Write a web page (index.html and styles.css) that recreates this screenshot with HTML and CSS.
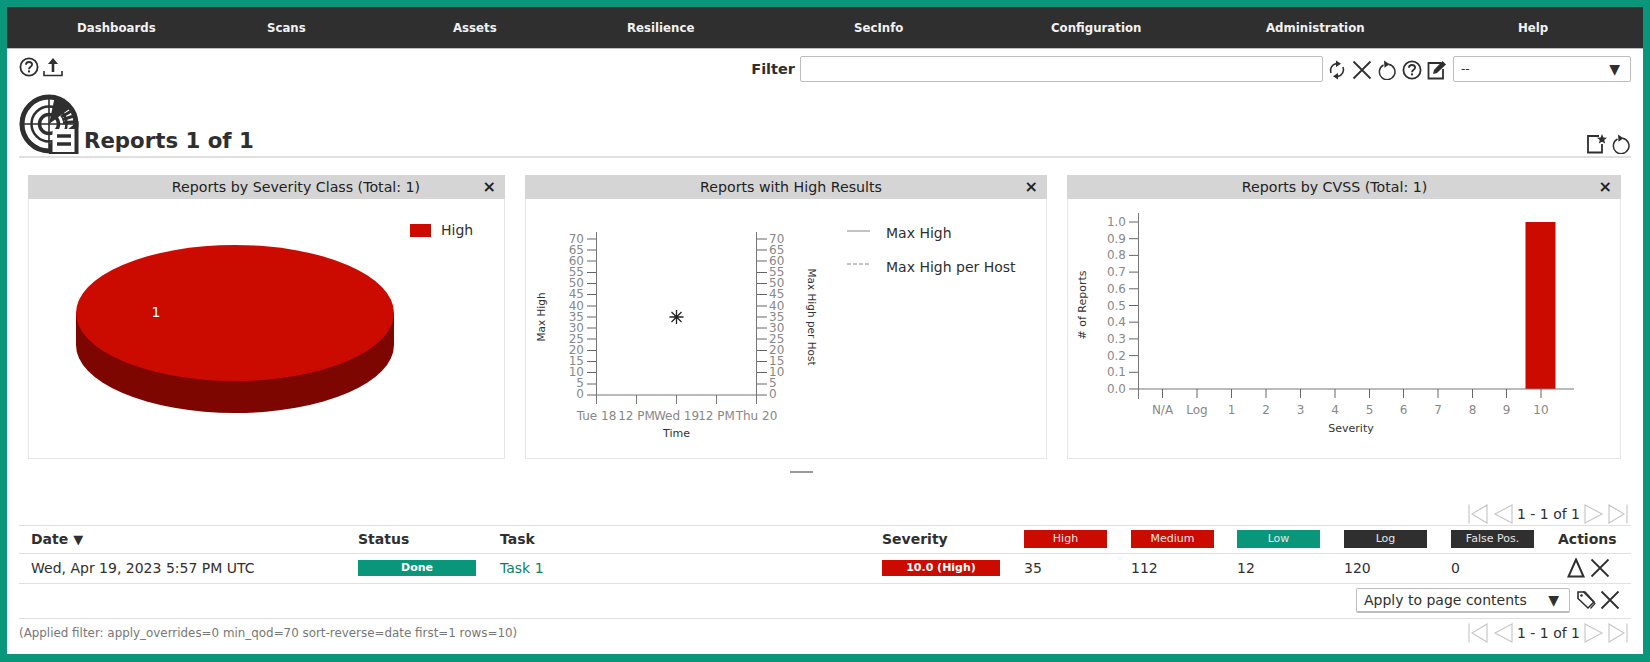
FILE: index.html
```html
<!DOCTYPE html>
<html>
<head>
<meta charset="UTF-8">
<title>Reports</title>
<link rel="stylesheet" href="styles.css">
</head>
<body>

<svg class="defs" width="0" height="0">
	<symbol id="i-help" viewBox="0 0 20 20">
		<circle cx="10" cy="10" r="8.6" fill="none" stroke="#2f2f2f" stroke-width="1.8"/>
		<path d="M6.9 7.8 C7 5.8 8.4 5 10 5 C11.8 5 13.1 6.1 13.1 7.6 C13.1 9.8 10 9.7 10 12.2" fill="none" stroke="#2f2f2f" stroke-width="1.8"/>
		<rect x="9" y="13.4" width="2" height="2" fill="#2f2f2f"/>
	</symbol>
	<symbol id="i-upload" viewBox="0 0 20 20">
		<path d="M10 1 L15 7 H11.3 V15 H8.7 V7 H5 Z" fill="#2f2f2f"/>
		<path d="M1 14 V18.5 H19 V14" fill="none" stroke="#2f2f2f" stroke-width="1.6"/>
	</symbol>
	<symbol id="i-close" viewBox="0 0 20 20">
		<path d="M1.5 1.5 L18.5 18.5 M18.5 1.5 L1.5 18.5" stroke="#2f2f2f" stroke-width="1.8"/>
	</symbol>
	<symbol id="i-reset" viewBox="0 0 20 20">
		<path d="M6.5 5 A7.8 7.8 0 1 0 11.5 4.2" fill="none" stroke="#2f2f2f" stroke-width="1.5"/>
		<path d="M7 0.5 L12.5 4.2 L7.5 7.8 Z" fill="#2f2f2f"/>
	</symbol>
	<symbol id="i-refresh" viewBox="0 0 20 20">
		<path d="M4 13 A7 7 0 0 1 9 3.6 M16 7 A7 7 0 0 1 11 16.4" fill="none" stroke="#2f2f2f" stroke-width="1.6"/>
		<path d="M9 0.5 L14 3.8 L9 7 Z M11 19.5 L6 16.2 L11 13 Z" fill="#2f2f2f"/>
	</symbol>
	<symbol id="i-edit" viewBox="0 0 20 20">
		<path d="M14 3 H1.5 V18.5 H16 V9" fill="none" stroke="#2f2f2f" stroke-width="1.8"/>
		<path d="M6 14 L7 10 L15.5 1 L19 4.5 L10 13 Z" fill="#2f2f2f"/>
	</symbol>
	<symbol id="i-new" viewBox="0 0 20 20">
		<path d="M12 2 H1 V18.5 H15 V10" fill="none" stroke="#2f2f2f" stroke-width="1.8"/>
		<path d="M15 0 L16.4 3.4 L20 3.7 L17.2 6 L18.2 9.6 L15 7.7 L11.8 9.6 L12.8 6 L10 3.7 L13.6 3.4 Z" fill="#2f2f2f"/>
	</symbol>
	<symbol id="i-delta" viewBox="0 0 20 20">
		<path d="M9 1.500 L16.500 18.500 H1.500 Z" fill="none" stroke="#2f2f2f" stroke-width="2"/>
	</symbol>
	<symbol id="i-tag" viewBox="0 0 20 20">
		<path d="M2 2 H9 L18 12 L12 18 L2 8.5 Z" fill="none" stroke="#2f2f2f" stroke-width="1.6"/>
		<path d="M7 1.5 L19 13.5 L14.5 18.5" fill="none" stroke="#2f2f2f" stroke-width="1.2"/>
		<circle cx="5.5" cy="5.5" r="1.3" fill="#2f2f2f"/>
	</symbol>
	<symbol id="i-first" viewBox="0 0 20 20">
		<path d="M1 0.5 V19.5 M19 1 L4 10 L19 19 Z" fill="none" stroke="#c8c8c8" stroke-width="1.2"/>
	</symbol>
	<symbol id="i-prev" viewBox="0 0 20 20">
		<path d="M19 1 L2 10 L19 19 Z" fill="none" stroke="#c8c8c8" stroke-width="1.2"/>
	</symbol>
	<symbol id="i-next" viewBox="0 0 20 20">
		<path d="M1 1 L18 10 L1 19 Z" fill="none" stroke="#c8c8c8" stroke-width="1.2"/>
	</symbol>
	<symbol id="i-last" viewBox="0 0 20 20">
		<path d="M19 0.5 V19.5 M1 1 L16 10 L1 19 Z" fill="none" stroke="#c8c8c8" stroke-width="1.2"/>
	</symbol>
</svg>

<div class="app">

	<div class="menu">
		<a>Dashboards</a>
		<a>Scans</a>
		<a>Assets</a>
		<a>Resilience</a>
		<a>SecInfo</a>
		<a>Configuration</a>
		<a>Administration</a>
		<a>Help</a>
	</div>

	<div class="main">

		<div class="toolbar">
			<div class="tools">
				<svg class="ico"><use href="#i-help"/></svg>
				<svg class="ico"><use href="#i-upload"/></svg>
			</div>
			<div class="filter">
				<b class="filter-label">Filter</b>
				<div class="filter-input"></div>
				<svg class="ico"><use href="#i-refresh"/></svg>
				<svg class="ico"><use href="#i-close"/></svg>
				<svg class="ico"><use href="#i-reset"/></svg>
				<svg class="ico"><use href="#i-help"/></svg>
				<svg class="ico"><use href="#i-edit"/></svg>
				<div class="select filter-select"><span>--</span><span class="arrow">▼</span></div>
			</div>
		</div>

		<div class="title-row">
			<svg class="logo" viewBox="0 0 60 60">
				<circle cx="30" cy="30" r="27" fill="#fff" stroke="#2f2f2f" stroke-width="5"/>
				<circle cx="30" cy="30" r="17.5" fill="none" stroke="#2f2f2f" stroke-width="2.500"/>
				<circle cx="30" cy="30" r="9.5" fill="none" stroke="#2f2f2f" stroke-width="3.5"/>
				<path d="M3 30 H57 M30 3 V57" stroke="#2f2f2f" stroke-width="1.6"/>
				<path d="M30 30 L36 2 A29 29 0 0 1 53 13 Z" fill="#2f2f2f"/>
				<path d="M42 23 L52.500 17 M43.300 25.700 L54.700 22 M44 28.800 L56 27.700" stroke="#2f2f2f" stroke-width="3"/>
				<path d="M59.5 27 V60 H30 V50 Z" fill="#2f2f2f"/>
				<rect x="33.5" y="35" width="22" height="23" fill="#fff"/>
				<path d="M38 42 H52 M38 50 H52" stroke="#2f2f2f" stroke-width="3.6"/>
			</svg>
			<h1 class="title">Reports 1 of 1</h1>
			<div class="title-tools">
				<svg class="ico"><use href="#i-new"/></svg>
				<svg class="ico"><use href="#i-reset"/></svg>
			</div>
		</div>

		<div class="panels">

			<div class="panel">
				<div class="panel-head head-sev"><span>Reports by Severity Class (Total: 1)</span><b class="panel-close">×</b></div>
				<svg class="chart" viewBox="29 199 475 259">
					<path d="M76 313 V345 A159 68 0 0 0 394 345 V313 Z" fill="#7d0600"/>
					<ellipse cx="235" cy="313" rx="159" ry="68" fill="#cc0b00"/>
					<text x="156" y="317" class="pie-label">1</text>
					<rect x="410" y="224" width="21" height="13" fill="#cc0b00"/>
					<text x="441" y="235" class="legend">High</text>
				</svg>
			</div>

			<div class="panel">
				<div class="panel-head head-high"><span>Reports with High Results</span><b class="panel-close">×</b></div>
				<svg class="chart" viewBox="526 199 520 259">
					<path d="M596.500 232 V404 M756.500 232 V404 M596.500 395 H756.500 M636.500 395 V404 M676.500 395 V404 M716.500 395 V404" stroke="#777" fill="none"/>
					<path d="M587 239 H596 M587 250 H596 M587 261 H596 M587 272.500 H596 M587 283.500 H596 M587 294.500 H596 M587 306 H596 M587 317 H596 M587 328 H596 M587 339 H596 M587 350.500 H596 M587 361.500 H596 M587 372.500 H596 M587 384 H596 M587 395 H596" stroke="#666"/>
					<path d="M757 239 H767 M757 250 H767 M757 261 H767 M757 272.500 H767 M757 283.500 H767 M757 294.500 H767 M757 306 H767 M757 317 H767 M757 328 H767 M757 339 H767 M757 350.500 H767 M757 361.500 H767 M757 372.500 H767 M757 384 H767 M757 395 H767" stroke="#666"/>
					<g class="tick tick-end">
						<text x="584" y="243">70</text><text x="584" y="254">65</text><text x="584" y="265">60</text><text x="584" y="276">55</text><text x="584" y="287">50</text><text x="584" y="298">45</text><text x="584" y="310">40</text><text x="584" y="321">35</text><text x="584" y="332">30</text><text x="584" y="343">25</text><text x="584" y="354">20</text><text x="584" y="365">15</text><text x="584" y="376">10</text><text x="584" y="387">5</text><text x="584" y="398">0</text>
					</g>
					<g class="tick">
						<text x="769" y="243">70</text><text x="769" y="254">65</text><text x="769" y="265">60</text><text x="769" y="276">55</text><text x="769" y="287">50</text><text x="769" y="298">45</text><text x="769" y="310">40</text><text x="769" y="321">35</text><text x="769" y="332">30</text><text x="769" y="343">25</text><text x="769" y="354">20</text><text x="769" y="365">15</text><text x="769" y="376">10</text><text x="769" y="387">5</text><text x="769" y="398">0</text>
					</g>
					<g class="tick tick-mid">
						<text x="596.500" y="420">Tue 18</text><text x="636.500" y="420">12 PM</text><text x="676.500" y="420">Wed 19</text><text x="716.500" y="420">12 PM</text><text x="756.500" y="420">Thu 20</text>
					</g>
					<text x="676.500" y="437" class="axis-title">Time</text>
					<text class="axis-title axis-side" transform="translate(545 317) rotate(-90)">Max High</text>
					<text class="axis-title axis-side" transform="translate(808 317) rotate(90)">Max High per Host</text>
					<path d="M676.500 310 V324 M669.500 317 H683.500 M671.500 312 L681.500 322 M681.500 312 L671.500 322" stroke="#222" stroke-width="1.3"/>
					<path d="M847 231 H870" stroke="#888"/>
					<path d="M847 264 H869" stroke="#888" stroke-dasharray="4 2"/>
					<text x="886" y="238" class="legend">Max High</text>
					<text x="886" y="272" class="legend">Max High per Host</text>
				</svg>
			</div>

			<div class="panel">
				<div class="panel-head head-cvss"><span>Reports by CVSS (Total: 1)</span><b class="panel-close">×</b></div>
				<svg class="chart" viewBox="1068 199 552 259">
					<rect x="1525.500" y="222" width="30" height="167" fill="#cc0b00"/>
					<path d="M1138.500 213 V399 M1138.500 389 H1574" stroke="#777" fill="none"/>
					<path d="M1129 222 H1138 M1129 238.700 H1138 M1129 255.400 H1138 M1129 272.100 H1138 M1129 288.800 H1138 M1129 305.500 H1138 M1129 322.200 H1138 M1129 338.900 H1138 M1129 355.600 H1138 M1129 372.300 H1138 M1129 389 H1138" stroke="#666"/>
					<path d="M1162.500 389 V398 M1197 389 V398 M1231.500 389 V398 M1266 389 V398 M1300.500 389 V398 M1335 389 V398 M1369.500 389 V398 M1403.500 389 V398 M1438 389 V398 M1472.500 389 V398 M1506.500 389 V398 M1541 389 V398" stroke="#666"/>
					<g class="tick tick-end">
						<text x="1126" y="226">1.0</text><text x="1126" y="243">0.9</text><text x="1126" y="259">0.8</text><text x="1126" y="276">0.7</text><text x="1126" y="293">0.6</text><text x="1126" y="310">0.5</text><text x="1126" y="326">0.4</text><text x="1126" y="343">0.3</text><text x="1126" y="360">0.2</text><text x="1126" y="376">0.1</text><text x="1126" y="393">0.0</text>
					</g>
					<g class="tick tick-mid">
						<text x="1162.500" y="414">N/A</text><text x="1197" y="414">Log</text><text x="1231.500" y="414">1</text><text x="1266" y="414">2</text><text x="1300.500" y="414">3</text><text x="1335" y="414">4</text><text x="1369.500" y="414">5</text><text x="1403.500" y="414">6</text><text x="1438" y="414">7</text><text x="1472.500" y="414">8</text><text x="1506.500" y="414">9</text><text x="1541" y="414">10</text>
					</g>
					<text x="1351" y="432" class="axis-title">Severity</text>
					<text class="axis-title" transform="translate(1086 305) rotate(-90)"># of Reports</text>
				</svg>
			</div>

		</div>

		<div class="handle"></div>

		<div class="pager">
			<svg class="ico"><use href="#i-first"/></svg>
			<svg class="ico"><use href="#i-prev"/></svg>
			<span>1 - 1 of 1</span>
			<svg class="ico"><use href="#i-next"/></svg>
			<svg class="ico"><use href="#i-last"/></svg>
		</div>

		<table class="reports">
			<colgroup>
				<col class="c-date"><col class="c-status"><col class="c-task"><col class="c-sev">
				<col class="c-num"><col class="c-num2"><col class="c-num"><col class="c-num"><col class="c-num"><col>
			</colgroup>
			<thead>
				<tr>
					<th class="first">Date <span class="sort">▼</span></th>
					<th>Status</th>
					<th>Task</th>
					<th>Severity</th>
					<th><div class="tag red">High</div></th>
					<th><div class="tag red">Medium</div></th>
					<th><div class="tag teal">Low</div></th>
					<th><div class="tag dark">Log</div></th>
					<th><div class="tag dark">False Pos.</div></th>
					<th>Actions</th>
				</tr>
			</thead>
			<tbody>
				<tr>
					<td class="first">Wed, Apr 19, 2023 5:57 PM UTC</td>
					<td><div class="bar bar-done">Done</div></td>
					<td><a class="link">Task 1</a></td>
					<td><div class="bar bar-sev">10.0 (High)</div></td>
					<td>35</td>
					<td>112</td>
					<td>12</td>
					<td>120</td>
					<td>0</td>
					<td><div class="actions">
						<svg class="ico"><use href="#i-delta"/></svg>
						<svg class="ico"><use href="#i-close"/></svg>
					</div></td>
				</tr>
				<tr>
					<td colspan="10" class="bulk-cell">
						<div class="bulk">
							<div class="select bulk-select"><span>Apply to page contents</span><span class="arrow">▼</span></div>
							<svg class="ico"><use href="#i-tag"/></svg>
							<svg class="ico"><use href="#i-close"/></svg>
						</div>
					</td>
				</tr>
			</tbody>
		</table>

		<div class="foot">
			<span class="applied">(Applied filter: apply_overrides=0 min_qod=70 sort-reverse=date first=1 rows=10)</span>
			<div class="pager pager-foot">
				<svg class="ico"><use href="#i-first"/></svg>
				<svg class="ico"><use href="#i-prev"/></svg>
				<span>1 - 1 of 1</span>
				<svg class="ico"><use href="#i-next"/></svg>
				<svg class="ico"><use href="#i-last"/></svg>
			</div>
		</div>

	</div>
</div>

</body>
</html>
```

FILE: styles.css
```css
* {
	box-sizing: border-box;
}

html, body {
	height: 100%;
}

body {
	margin: 0;
	padding: 7px 7px 8px 7px;
	background: #0a967a;
	font-family: "DejaVu Sans", sans-serif;
	font-size: 14px;
	color: #2f2f2f;
}

.defs {
	position: absolute;
}

.app {
	height: 100%;
	background: #fff;
}

.ico {
	width: 20px;
	height: 20px;
	flex: none;
}

/* top menu */
.menu {
	display: grid;
	grid-template-columns: 190px 186px 174px 227px 197px 215px 252px 1fr;
	align-items: center;
	height: 42px;
	padding-left: 70px;
	background: #2f2f2f;
	border-bottom: 1px solid #bdbdbd;
	color: #f2f2f2;
	font-size: 11.750px;
	font-weight: bold;
}

.main {
	padding: 0 12px;
}

/* filter bar */
.toolbar {
	display: flex;
	justify-content: space-between;
	padding-top: 7px;
	height: 44px;
}

.tools {
	display: flex;
	gap: 4px;
	padding-top: 1px;
}

.filter {
	display: flex;
	align-items: flex-start;
	gap: 5px;
}

.filter .ico {
	margin-top: 4px;
}

.filter-label {
	margin-top: 5px;
	font-size: 14.500px;
}

.filter-input {
	width: 523px;
	height: 26px;
	margin-right: -1px;
	border: 1px solid #bdbdbd;
	border-radius: 2px;
}

.select {
	display: flex;
	justify-content: space-between;
	align-items: center;
	border: 1px solid #bdbdbd;
	border-radius: 2px;
}

.filter-select {
	width: 178px;
	height: 26px;
	padding: 0 10px 0 7px;
	margin-left: 1px;
	font-size: 12px;
}

.arrow {
	font-size: 14px;
}

/* title */
.title-row {
	display: flex;
	align-items: flex-end;
	height: 65px;
	padding-bottom: 2px;
	border-bottom: 2px solid #e0e0e0;
}

.logo {
	width: 60px;
	height: 60px;
	flex: none;
}

.title {
	margin: 0 0 0 5px;
	font-size: 21.300px;
	font-weight: bold;
	line-height: 26px;
}

.title-tools {
	display: flex;
	gap: 4px;
	margin-left: auto;
}

/* charts */
.panels {
	display: grid;
	grid-template-columns: 477px 522px 554px;
	gap: 20px;
	margin: 17px 10px 0 9px;
}

.panel {
	height: 284px;
	border: 1px solid #e6e6e6;
	border-top: 0;
}

.panel-head {
	position: relative;
	height: 24px;
	margin: 0 -1px;
	background: #d5d5d5;
	text-align: center;
	font-size: 14.200px;
	line-height: 24px;
	color: #222;
}

.head-sev { padding-left: 59px; }
.head-high { padding-left: 10px; }
.head-cvss { padding-right: 19px; }

.panel-close {
	position: absolute;
	right: 9px;
	top: 0;
	font-size: 16px;
}

.chart {
	display: block;
	width: 100%;
	height: 259px;
}

.chart text {
	font-family: "DejaVu Sans", sans-serif;
}

.pie-label {
	fill: #fff;
	font-size: 14px;
	text-anchor: middle;
}

.legend {
	font-size: 14px;
	fill: #2f2f2f;
}

.tick text {
	font-size: 12px;
	fill: #888;
}

.tick-end text {
	text-anchor: end;
}

.tick-mid text {
	text-anchor: middle;
}

.axis-title {
	font-size: 11px;
	fill: #333;
	text-anchor: middle;
}

.axis-side {
	font-size: 10.500px;
}

.handle {
	width: 23px;
	height: 2px;
	margin: 12px 0 0 771px;
	background: #999;
}

/* pagination */
.pager {
	display: flex;
	justify-content: flex-end;
	align-items: center;
	gap: 4px;
	margin-top: 31px;
	margin-right: 3px;
	height: 20px;
	font-size: 14px;
}

.pager .ico:nth-child(2) {
	margin-left: 1px;
}

.pager-foot {
	margin-top: 0;
}

/* table */
.reports {
	width: 100%;
	margin-top: 1px;
	border-collapse: collapse;
	table-layout: fixed;
	border-top: 1px solid #e0e0e0;
}

.c-date { width: 339px; }
.c-status { width: 142px; }
.c-task { width: 382px; }
.c-sev { width: 142px; }
.c-num { width: 107px; }
.c-num2 { width: 106px; }

.reports th, .reports td {
	padding: 0 0 2px 0;
	text-align: left;
}

.reports thead tr {
	height: 28px;
	border-bottom: 1px solid #e0e0e0;
}

.reports tbody tr {
	height: 30px;
	border-bottom: 1px solid #e0e0e0;
}

.reports .first {
	padding-left: 12px;
}

.sort {
	font-size: 13px;
}

.tag {
	width: 83px;
	height: 18px;
	text-align: center;
	font-size: 11px;
	font-weight: normal;
	line-height: 18px;
	color: #e6e6e6;
}

.red { background: #cc0b00; }
.teal { background: #0a967a; }
.dark { background: #2f2f2f; }

.bar {
	height: 16px;
	text-align: center;
	font-size: 11px;
	font-weight: bold;
	line-height: 16px;
	color: #fff;
}

.bar-done {
	width: 118px;
	background: #0a967a;
}

.bar-sev {
	width: 118px;
	background: #cc0b00;
}

.link {
	color: #0a7f68;
}

.actions {
	display: flex;
	gap: 3px;
	padding-left: 9px;
}

.actions .ico {
	display: block;
}

.reports tbody .bulk-cell {
	height: 35px;
}

.bulk {
	display: flex;
	justify-content: flex-end;
	align-items: center;
	gap: 4px;
	padding-right: 11px;
}

.bulk-select {
	width: 214px;
	height: 25px;
	padding: 0 10px 0 7px;
	border-bottom-width: 2px;
	margin-right: 2px;
}

.foot {
	display: flex;
	justify-content: space-between;
	align-items: center;
	height: 28px;
}

.applied {
	font-size: 11.900px;
	color: #777;
}
```
